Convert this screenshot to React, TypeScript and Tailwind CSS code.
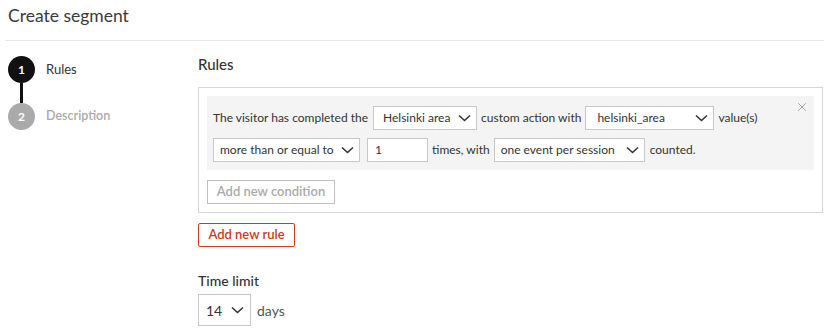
import { X } from "lucide-react";

function Chevron() {
	return (
		<svg width="13" height="8" viewBox="0 0 13 8" className="shrink-0">
			<polyline points="1,1.5 6.5,6.5 12,1.5" fill="none" stroke="#333" strokeWidth="1.6" />
		</svg>
	);
}

function Select({ label, className }: { label: string; className: string }) {
	return (
		<div
			className={`flex shrink-0 items-center justify-between whitespace-nowrap border border-[#c8c8c8] bg-white px-[9px] ${className}`}
		>
			<span>{label}</span>
			<Chevron />
		</div>
	);
}

export default function App() {
	return (
		<div
			className="w-[829px] h-[332px] bg-white text-[#333] text-[12px] overflow-hidden"
			style={{ fontFamily: "Lato, 'Open Sans', sans-serif" }}
		>
			<div className="mx-[5px] h-[41px] border-b border-[#e6e6e6] pl-[3px] pt-[5px] text-[17.5px] leading-[22px] text-[#3a3a3a]">
				Create segment
			</div>
			<div className="flex">
				<div className="w-[198px] pl-[8px] pt-[15px]">
					<div className="flex items-center">
						<div className="flex size-[27px] items-center justify-center rounded-full bg-[#111] text-[12px] font-bold text-white">
							1
						</div>
						<span className="ml-[11px] text-[13px]">Rules</span>
					</div>
					<div className="ml-[12px] h-[20px] w-[3px] bg-[#111]" />
					<div className="flex items-center">
						<div className="flex size-[27px] items-center justify-center rounded-full bg-[#aaa] text-[12px] font-bold text-white">
							2
						</div>
						<span className="ml-[11px] text-[12.5px] font-semibold text-[#aaa]">
							Description
						</span>
					</div>
				</div>
				<div className="flex-1 pr-[6px] pt-[13px]">
					<div className="text-[15px] font-medium leading-[20px]">Rules</div>
					<div className="mt-[13px] border border-[#d6d6d6] p-[8px] pb-[8px]">
						<div className="relative bg-[#f4f4f4] px-[6px] pt-[10px] pb-[8px]">
							<X className="absolute right-[5px] top-[4px] size-[14px] text-[#999]" strokeWidth={1.5} />
							<div className="flex h-[24px] items-center whitespace-nowrap">
								<span>The visitor has completed the</span>
								<Select label="Helsinki area" className="ml-[5px] h-[24px] w-[104px] pl-[9px] pr-[5px]" />
								<span className="ml-[4px]">custom action with</span>
								<Select label="helsinki_area" className="ml-[4px] h-[24px] w-[129px] pl-[11px] pr-[5px]" />
								<span className="ml-[4px]">value(s)</span>
							</div>
							<div className="mt-[8px] flex h-[24px] items-center whitespace-nowrap">
								<Select label="more than or equal to" className="h-[24px] w-[147px] pl-[6px] pr-[5px]" />
								<div className="ml-[7px] flex h-[24px] w-[61px] shrink-0 items-center border border-[#c8c8c8] bg-white px-[7px]">
									1
								</div>
								<span className="ml-[4px]">times, with</span>
								<Select label="one event per session" className="ml-[4px] h-[24px] w-[151px] pl-[6px] pr-[5px]" />
								<span className="ml-[5px]">counted.</span>
							</div>
						</div>
						<button className="mt-[10px] h-[24px] w-[128px] border border-[#c0c0c0] bg-white text-[13px] font-semibold text-[#aaa]">
							Add new condition
						</button>
					</div>
					<button className="mt-[10px] h-[24px] w-[97px] rounded-[2px] border border-[#cc3a1a] bg-white text-[13px] font-semibold text-[#cc3a1a]">
						Add new rule
					</button>
					<div className="mt-[25px] text-[14px] font-medium leading-[18px]">Time limit</div>
					<div className="mt-[4px] flex items-center">
						<Select label="14" className="h-[32px] w-[53px] pl-[7px] pr-[6px] text-[14px]" />
						<span className="ml-[6px] text-[14px] text-[#555]">days</span>
					</div>
				</div>
			</div>
		</div>
	);
}
